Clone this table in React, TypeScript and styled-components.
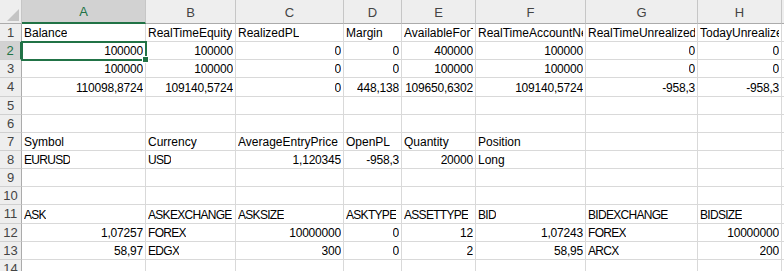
import React from "react";
import styled, { createGlobalStyle, css } from "styled-components";

const GlobalStyle = createGlobalStyle`
	html, body {
		margin: 0;
		padding: 0;
		background: #ffffff;
		overflow: hidden;
	}
`;

const GREEN = "#217346";
const GRID = "#d9d9d9";

const COLS = ["A", "B", "C", "D", "E", "F", "G", "H", "I"];
const WIDTHS = [22, 124, 90, 108, 58, 74, 110, 112, 84, 80];

type CellValue = string | number | null;

// each row of the sheet, column A onward; "#" marks a number stored as text
const rows: CellValue[][] = [
	["Balance", "RealTimeEquity", "RealizedPL", "Margin", "AvailableForTrading", "RealTimeAccountNetWorth", "RealTimeUnrealizedGains", "TodayUnrealizedPL", "Net"],
	[100000, 100000, 0, 0, 400000, 100000, 0, 0],
	[100000, 100000, 0, 0, 100000, 100000, 0, 0],
	["110098,8724#", "109140,5724#", 0, "448,138#", "109650,6302#", "109140,5724#", "-958,3#", "-958,3#"],
	[],
	[],
	["Symbol", "Currency", "AverageEntryPrice", "OpenPL", "Quantity", "Position"],
	["EURUSD", "USD", "1,120345#", "-958,3#", 20000, "Long"],
	[],
	[],
	["ASK", "ASKEXCHANGE", "ASKSIZE", "ASKTYPE", "ASSETTYPE", "BID", "BIDEXCHANGE", "BIDSIZE"],
	["1,07257#", "FOREX", 10000000, 0, 12, "1,07243#", "FOREX", 10000000],
	["58,97#", "EDGX", 300, 0, 2, "58,95#", "ARCX", 200],
	[],
];

type Kind = "text" | "caps" | "number";

const Sheet = styled.div`
	display: grid;
	grid-template-columns: ${WIDTHS.map(w => `${w}px`).join(" ")};
	grid-template-rows: 24px repeat(14, 18.15px);
	font-family: "Liberation Sans", Arial, sans-serif;
	font-size: 12px;
	color: #000000;
	width: 784px;
	height: 271px;
	overflow: hidden;
`;

const Corner = styled.div`
	position: relative;
	background: #eeeeee;
	border-right: 1px solid #c6c6c6;
	border-bottom: 1px solid #ababab;

	&::after {
		content: "";
		position: absolute;
		right: 2px;
		bottom: 2px;
		width: 0;
		height: 0;
		border-left: 12px solid transparent;
		border-bottom: 12px solid #c4c4c4;
	}
`;

const ColHead = styled.div<{ $active?: boolean }>`
	display: flex;
	align-items: center;
	justify-content: center;
	padding-top: 1px;
	background: #eeeeee;
	color: #444444;
	font-size: 13px;
	border-right: 1px solid #c6c6c6;
	border-bottom: 1px solid #ababab;

	${p =>
		p.$active &&
		css`
			background: #d2d2d2;
			color: ${GREEN};
			border-bottom: 2px solid ${GREEN};
		`}
`;

const RowHead = styled.div<{ $active?: boolean }>`
	display: flex;
	align-items: center;
	justify-content: center;
	background: #eeeeee;
	color: #444444;
	font-size: 13px;
	border-right: 1px solid #ababab;
	border-bottom: 1px solid #d0d0d0;

	${p =>
		p.$active &&
		css`
			background: #d2d2d2;
			color: ${GREEN};
			border-right: 2px solid ${GREEN};
		`}
`;

const Cell = styled.div<{ $kind: Kind; $selected?: boolean }>`
	position: relative;
	display: flex;
	align-items: flex-end;
	justify-content: ${p => (p.$kind === "number" ? "flex-end" : "flex-start")};
	padding: 0 2px 1px 2px;
	border-right: 1px solid ${GRID};
	border-bottom: 1px solid ${GRID};
	white-space: nowrap;
	overflow: hidden;
	min-width: 0;
	letter-spacing: ${p =>
		p.$kind === "caps" ? "-0.7px" : p.$kind === "number" ? "-0.2px" : "0"};

	${p =>
		p.$selected &&
		css`
			overflow: visible;
			outline: 2px solid ${GREEN};
			outline-offset: -1px;
			z-index: 2;

			&::after {
				content: "";
				position: absolute;
				right: -4px;
				bottom: -4px;
				width: 5px;
				height: 5px;
				background: ${GREEN};
				border: 1px solid #ffffff;
			}
		`}
`;

const Text = styled.span`
	display: block;
	overflow: hidden;
	line-height: 14px;
`;

const kindOf = (raw: CellValue | undefined): Kind => {
	if (typeof raw === "number") return "number";
	if (typeof raw === "string") {
		if (raw.endsWith("#")) return "number";
		if (raw.length > 2 && raw === raw.toUpperCase()) return "caps";
	}
	return "text";
};

export default function App() {
	return (
		<>
			<GlobalStyle />
			<Sheet>
				<Corner />
				{COLS.map(c => (
					<ColHead key={c} $active={c === "A"}>
						{c}
					</ColHead>
				))}
				{rows.map((row, r) => (
					<React.Fragment key={r}>
						<RowHead $active={r === 1}>{r + 1}</RowHead>
						{COLS.map((c, i) => {
							const raw = row[i];
							const text =
								raw === null || raw === undefined
									? ""
									: typeof raw === "string"
									? raw.replace(/#$/, "")
									: String(raw);
							return (
								<Cell key={c} $kind={kindOf(raw)} $selected={r === 1 && i === 0}>
									<Text>{text}</Text>
								</Cell>
							);
						})}
					</React.Fragment>
				))}
			</Sheet>
		</>
	);
}
